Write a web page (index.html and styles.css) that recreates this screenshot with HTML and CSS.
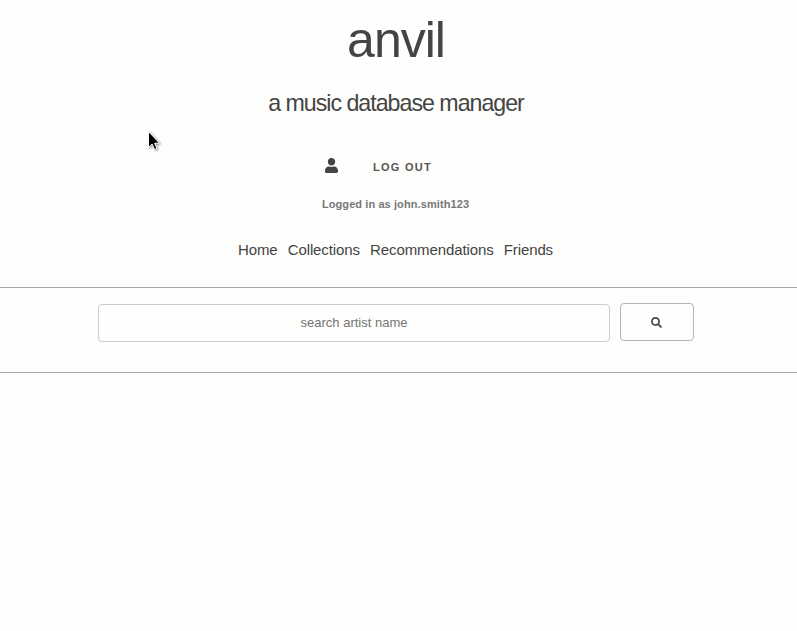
FILE: index.html
```html
<!DOCTYPE html>
<html lang="en">
<head>
<meta charset="utf-8">
<title>anvil</title>
<link rel="stylesheet" href="styles.css">
</head>
<body>
<header class="header">
  <h1 class="title">anvil</h1>
  <h2 class="subtitle">a music database manager</h2>
  <div class="account">
    <svg class="user-icon" viewBox="0 0 448 512"><path d="M224 256c70.700 0 128-57.300 128-128S294.700 0 224 0 96 57.300 96 128s57.300 128 128 128zm89.600 32h-16.700c-22.200 10.200-46.900 16-72.900 16s-50.600-5.800-72.900-16h-16.700C60.200 288 0 348.200 0 422.400V464c0 26.500 21.500 48 48 48h352c26.500 0 48-21.500 48-48v-41.600c0-74.200-60.200-134.400-134.400-134.400z"/></svg>
    <button class="logout">Log out</button>
  </div>
  <p class="status">Logged in as john.smith123</p>
  <nav class="nav"><a>Home</a><a>Collections</a><a>Recommendations</a><a>Friends</a></nav>
</header>
<form class="search">
  <input class="search-input" type="text" placeholder="search artist name">
  <button class="search-button" type="button" aria-label="Search"><svg class="search-icon" viewBox="0 0 512 512"><path d="M505 442.700L405.300 343c-4.500-4.500-10.600-7-17-7H372c27.600-35.300 44-79.700 44-128C416 93.100 322.900 0 208 0S0 93.100 0 208s93.100 208 208 208c48.300 0 92.700-16.400 128-44v16.300c0 6.400 2.500 12.500 7 17l99.700 99.700c9.400 9.400 24.600 9.400 33.900 0l28.300-28.300c9.400-9.400 9.400-24.600.1-34zM208 336c-70.700 0-128-57.200-128-128 0-70.700 57.200-128 128-128 70.700 0 128 57.200 128 128 0 70.700-57.200 128-128 128z"/></svg></button>
</form>
<svg class="cursor" viewBox="0 0 12 19"><path d="M.5.5v16l3.600-3.400 2.400 5.400 2.500-1-2.400-5.300h4.900z"/></svg>
</body>
</html>
```

FILE: styles.css
```css
* { box-sizing: border-box; }
body {
  margin: 0;
  background: #fefefd;
  color: #444;
  font-family: "Liberation Sans", Arial, sans-serif;
}
.header {
  height: 288px;
  padding-right: 5px;
  border-bottom: 1px solid #a5a5a5;
  display: flex;
  flex-direction: column;
  align-items: center;
}
.title {
  margin: 10px 0 0;
  font-size: 50px;
  line-height: 60px;
  font-weight: 400;
  letter-spacing: -1px;
}
.subtitle {
  margin: 18px 0 0;
  font-size: 23.2px;
  line-height: 30px;
  font-weight: 400;
  letter-spacing: -1px;
}
.account {
  width: 142px;
  height: 38px;
  margin: 30px 0 0;
  display: flex;
  align-items: center;
  gap: 35px;
}
.user-icon { width: 13px; height: 15px; margin-top: -3px; fill: #444; }
.logout {
  padding: 0;
  border: 0;
  background: none;
  color: #555;
  font: 600 11px/38px "Liberation Sans", Arial, sans-serif;
  letter-spacing: 1.27px;
  text-transform: uppercase;
  white-space: nowrap;
}
.status {
  margin: 10px 1px 0 0;
  color: #777;
  font-size: 11px;
  line-height: 16px;
  font-weight: 700;
  letter-spacing: .09px;
}
.nav {
  display: flex;
  gap: 10.1px;
  margin: 28px 1px 0 0;
  font-size: 15px;
  line-height: 20px;
  letter-spacing: -.1px;
}
.search {
  height: 85px;
  padding: 15px 103px 0 98px;
  display: flex;
  gap: 10px;
  border-bottom: 1px solid #a5a5a5;
}
.search-input {
  width: 512px;
  height: 38px;
  margin-top: 1px;
  padding: 0 2px 1px;
  border: 1px solid #ccc;
  border-radius: 4px;
  background: #fefefd;
  font: 13px "Liberation Sans", Arial, sans-serif;
  text-align: center;
}
.search-input::placeholder { color: #757575; }
.search-button {
  width: 74px;
  height: 38px;
  padding: 0 2px 0 0;
  border: 1px solid #b5b5b5;
  border-radius: 4px;
  background: none;
  display: flex;
  align-items: center;
  justify-content: center;
}
.search-icon { width: 11px; height: 11px; fill: #4a4a4a; }
.cursor {
  position: absolute;
  left: 148px;
  top: 131px;
  width: 12px;
  height: 19px;
  fill: #000;
  stroke: #fff;
  overflow: visible;
  filter: drop-shadow(1px 1px 1px rgba(0, 0, 0, .45));
}
```
